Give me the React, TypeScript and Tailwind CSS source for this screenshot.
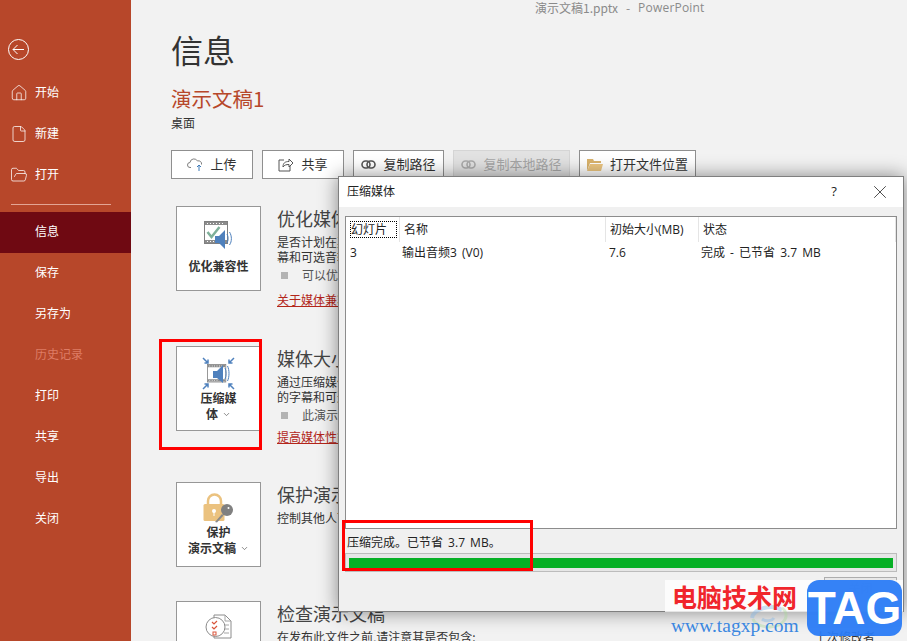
import { ChevronDown, File, FolderOpen, Home, X } from 'lucide-react';
import type { ReactNode } from 'react';

const FONT = "font-['Noto_Sans_CJK_SC','Noto_Sans',sans-serif]";

function NavItem({ label, icon, active, muted, low }: { label: string; icon?: ReactNode; active?: boolean; muted?: boolean; low?: boolean }) {
  return (
    <div
      className={`flex h-[41px] items-center text-[12px] ${active ? 'bg-[#6f0912] text-white' : muted ? 'text-[#de7c65]' : 'text-white'}`}
    >
      <span className="flex w-[35px] justify-center pl-[3px]">{icon}</span>
      <span className={low ? 'pb-[4px]' : 'pb-[2px]'}>{label}</span>
    </div>
  );
}

function Sidebar() {
  return (
    <div className="flex h-full w-[131px] shrink-0 flex-col bg-[#b7472a]">
      <div className="h-[72px] pl-[8px] pt-[39px]">
        <svg width="21" height="21" viewBox="0 0 21 21" fill="none" stroke="white" strokeWidth="1">
          <circle cx="10.5" cy="10.5" r="10" />
          <path d="M5 10.5h11M9.5 6l-4.5 4.5 4.5 4.5" />
        </svg>
      </div>
      <NavItem label="开始" icon={<Home size={18} strokeWidth={1} />} />
      <NavItem label="新建" icon={<File size={18} strokeWidth={1} />} />
      <NavItem label="打开" icon={<FolderOpen size={18} strokeWidth={1} />} />
      <div className="mb-[7px] ml-[11px] mt-[9px] h-px w-[100px] bg-[#e3a594]" />
      <NavItem label="信息" active low />
      <NavItem label="保存" low />
      <NavItem label="另存为" low />
      <NavItem label="历史记录" muted low />
      <NavItem label="打印" low />
      <NavItem label="共享" low />
      <NavItem label="导出" low />
      <NavItem label="关闭" low />
    </div>
  );
}

function LinkIcon({ color }: { color: string }) {
  return (
    <svg width="15" height="9" viewBox="0 0 15 9" fill="none" stroke={color} strokeWidth="1.6">
      <rect x="1" y="1" width="8" height="7" rx="3.5" />
      <rect x="6" y="1" width="8" height="7" rx="3.5" />
    </svg>
  );
}

function ActionButton({ label, icon, width, disabled }: { label: string; icon: ReactNode; width: string; disabled?: boolean }) {
  return (
    <div
      className={`flex h-[29px] items-center justify-center gap-[7px] border text-[13px] ${width} ${
        disabled ? 'border-[#d5d5d5] bg-[#e2e2e2] text-[#a6a6a6]' : 'border-[#8f8f8f] bg-white text-[#333]'
      }`}
    >
      {icon}
      <span className="pb-px">{label}</span>
    </div>
  );
}

function FilmSpeaker() {
  return (
    <>
      <rect x="0.5" y="0.5" width="23" height="22" fill="#fff" stroke="#7f7f7f" />
      <path d="M1 1h22v3H1zM1 19h22v3H1z" fill="#8c8c8c" />
      <path d="M3 2h1v1H3zM6 2h1v1H6zM9 2h1v1H9zM12 2h1v1h-1zM15 2h1v1h-1zM18 2h1v1h-1zM3 20h1v1H3zM6 20h1v1H6zM9 20h1v1H9zM12 20h1v1h-1z" fill="#fff" />
    </>
  );
}

function OptimizeIcon() {
  return (
    <svg width="29" height="29" viewBox="0 0 29 29" fill="none">
      <FilmSpeaker />
      <path d="M3.5 11l4 5 8-10" stroke="#7fb09a" strokeWidth="2.5" />
      <path d="M11 15h4l6-6v19l-6-6h-4z" fill="#4f81bd" />
      <path d="M23 13c1.5 2.5 1.5 6.5 0 9M25.5 11c2.5 4 2.5 9.5 0 13" stroke="#4f81bd" strokeWidth="1" />
    </svg>
  );
}

function CompressIcon() {
  return (
    <svg width="33" height="33" viewBox="0 0 33 33" fill="none">
      <g transform="translate(5 7) scale(0.8)">
        <FilmSpeaker />
      </g>
      <path d="M11 14h4l6-6v18l-6-5h-4z" fill="#4f81bd" />
      <path d="M23 11c1.5 3 1.5 8 0 11M25.5 9c2 4 2 11 0 15" stroke="#4f81bd" strokeWidth="1" />
      <path
        d="M1 1l5 5M6 2.5V6H2.5M32 1l-5 5M27 2.5V6h3.5M1 32l5-5M6 30.5V27H2.5M32 32l-5-5M27 30.5V27h3.5"
        stroke="#4f81bd"
        strokeWidth="1.5"
      />
    </svg>
  );
}

function LockIcon() {
  return (
    <svg width="31" height="31" viewBox="0 0 31 31" fill="none">
      <path d="M5 11V8a6.5 6.5 0 0 1 13 0v3" stroke="#ebc27f" strokeWidth="2.5" />
      <rect x="0.5" y="11" width="21" height="17" rx="1.5" fill="#ebc27f" />
      <circle cx="11" cy="18" r="2" fill="#fff" />
      <path d="M10.5 18h1v5h-1z" fill="#fff" />
      <path d="M12 29l7-8 1.5 1.5-6.5 7z" fill="#8a8a8a" />
      <circle cx="24" cy="17" r="6" fill="#808080" />
      <circle cx="25.5" cy="15" r="1" fill="#fff" />
    </svg>
  );
}

function InspectIcon() {
  return (
    <svg width="28" height="26" viewBox="0 0 28 26" fill="none">
      <path d="M9 1h11l6 6v17H9z" fill="#fff" stroke="#8c8c8c" />
      <path d="M20 1v6h6M19 11h5M19 15h5M19 19h5" stroke="#a6a6a6" />
      <circle cx="10.5" cy="13" r="9.5" fill="#fff" stroke="#8c8c8c" />
      <path d="M7 8l2 2 3-3M7 13l2 2 3-3" stroke="#d9553b" strokeWidth="1.2" />
      <rect x="8" y="18" width="3" height="3" stroke="#d9553b" />
    </svg>
  );
}

function Card({ icon, lines, caret, padTop, iconBox }: { icon: ReactNode; lines: string[]; caret?: boolean; padTop: string; iconBox: string }) {
  return (
    <div className={`flex h-[85px] w-[85px] shrink-0 flex-col items-center border border-[#979797] bg-white text-[12px] font-bold leading-[16px] text-[#333] ${padTop}`}>
      <div className={`flex items-start justify-center ${iconBox}`}>{icon}</div>
      {lines.map((line, i) => (
        <div key={line} className="flex items-center">
          {line}
          {caret && i === lines.length - 1 && <ChevronDown size={9} className="ml-[4px] text-[#666]" />}
        </div>
      ))}
    </div>
  );
}

function Section({
  heading,
  icon,
  lines,
  caret,
  body,
  bullet,
  link,
  linkGap = 'mt-[11px]',
  height,
  padTop,
  iconBox,
  aside,
}: {
  heading: string;
  icon: ReactNode;
  lines: string[];
  caret?: boolean;
  body: string[];
  bullet?: string;
  link?: string;
  linkGap?: string;
  height: string;
  padTop: string;
  iconBox: string;
  aside?: string;
}) {
  return (
    <div className={`ml-[45px] flex w-[699px] gap-[16px] ${height}`}>
      <Card icon={icon} lines={lines} caret={caret} padTop={padTop} iconBox={iconBox} />
      <div className="whitespace-nowrap">
        <div className="text-[18px] leading-[24px] text-[#444]">{heading}</div>
        <div className="mt-[4px] text-[12px] leading-[15px] text-[#333]">
          {body.map((text) => (
            <div key={text}>{text}</div>
          ))}
        </div>
        {bullet && (
          <div className="mt-[4px] flex items-center text-[12px] leading-[14px] text-[#555]">
            <span className="ml-[4px] mr-[14px] h-[7px] w-[7px] bg-[#b3b3b3]" />
            {bullet}
          </div>
        )}
        {link && <div className={`text-[12px] leading-[14px] text-[#b3261a] underline ${linkGap}`}>{link}</div>}
      </div>
      {aside && <div className="ml-auto mt-[28px] whitespace-nowrap text-[12px] leading-[16px] text-[#333]">{aside}</div>}
    </div>
  );
}

function Main() {
  return (
    <div className="relative min-w-0 flex-1 overflow-hidden bg-[#f2f2f2]">
      <div className="flex h-[14px] pl-[404px] text-[12px] leading-[16px] text-[#8a8a8a]">
        <span>演示文稿1.pptx</span>
        <span className="ml-[8px]">-</span>
        <span className="ml-[8px] font-['Open_Sans',sans-serif] tracking-[0.2px]">PowerPoint</span>
      </div>
      <div className="ml-[40px] mt-[13px] text-[32px] leading-[44px] text-[#333]">信息</div>
      <div className="ml-[40px] mt-[12px] text-[20.5px] leading-[30px] text-[#b7472a]">演示文稿1</div>
      <div className="ml-[40px] mt-[2px] text-[12px] leading-[16px] text-[#333]">桌面</div>
      <div className="ml-[40px] mt-[19px] flex gap-[9px]">
        <ActionButton
          label="上传"
          width="w-[82px]"
          icon={
            <svg width="16" height="15" viewBox="0 0 16 15" fill="none">
              <path d="M4 10.5H3a2.5 2.5 0 0 1 0-5 4 4 0 0 1 7.5-1.5 3 3 0 0 1 4 3.5" stroke="#808080" />
              <path d="M12 14V8M10 10l2-2 2 2" stroke="#3d7ab8" />
            </svg>
          }
        />
        <ActionButton
          label="共享"
          width="w-[82px]"
          icon={
            <svg width="16" height="15" viewBox="0 0 16 15" fill="none" stroke="#555">
              <path d="M6 3H1v11h11V9" />
              <path d="M5 10c0-4 2-5.5 6-5.5V2l4 4-4 4V7.5c-3 0-4.5.5-6 2.5z" />
            </svg>
          }
        />
        <ActionButton label="复制路径" width="w-[91px]" icon={<LinkIcon color="#555" />} />
        <ActionButton label="复制本地路径" width="w-[117px]" disabled icon={<LinkIcon color="#aaa" />} />
        <ActionButton
          label="打开文件位置"
          width="w-[117px]"
          icon={
            <svg width="16" height="13" viewBox="0 0 16 13">
              <path d="M0 13V1h6l1 2h7v2H3z" fill="#d9b26b" />
              <path d="M0 13l3-7h13l-2 7z" fill="#ecc681" />
            </svg>
          }
        />
      </div>
      <div className="mt-[27px]">
        <Section
          height="h-[140px]"
          padTop="pt-[14px]"
          iconBox="h-[37px]"
          heading="优化媒体兼容性"
          icon={<OptimizeIcon />}
          lines={['优化兼容性']}
          body={['是否计划在其他设备上演示此演示文稿?优化媒体兼容性可改善播放效果,包括字', '幕和可选音轨。']}
          bullet="可以优化演示文稿中的媒体文件。"
          link="关于媒体兼容性的详细信息"
        />
        <Section
          height="h-[136px]"
          padTop="pt-[10px]"
          iconBox="h-[33px]"
          heading="媒体大小和性能"
          icon={<CompressIcon />}
          lines={['压缩媒', '体']}
          caret
          body={['通过压缩媒体文件可节省磁盘空间并提高播放性能。压缩媒体可能影响媒体质量。', '的字幕和可选音轨已被删除。']}
          bullet="此演示文稿中的媒体文件为 3.9 MB。"
          link="提高媒体性能"
          linkGap="mt-[8px]"
        />
        <Section
          height="h-[119px]"
          padTop="pt-[10px]"
          iconBox="h-[31px]"
          heading="保护演示文稿"
          icon={<LockIcon />}
          lines={['保护', '演示文稿']}
          caret
          body={['控制其他人可以对此演示文稿所做的更改类型。']}
        />
        <Section
          height="h-[40px]"
          padTop="pt-[12px]"
          iconBox="h-[37px]"
          heading="检查演示文稿"
          icon={<InspectIcon />}
          lines={[]}
          body={['在发布此文件之前,请注意其是否包含:']}
          aside="上次修改者"
        />
      </div>
    </div>
  );
}

function Dialog() {
  return (
    <div className="absolute left-[338px] top-[176px] flex h-[436px] w-[566px] flex-col border border-[#7f7f7f] bg-[#f0f0f0] font-['Open_Sans','Noto_Sans_CJK_SC',sans-serif] text-[12px] text-[#222] [word-spacing:2px] shadow-[0_0_18px_rgba(0,0,0,0.45)]">
      <div className="flex h-[30px] shrink-0 items-center bg-white pl-[8px]">
        <span className="flex-1 pb-px">压缩媒体</span>
        <span className="w-[46px] text-center text-[13px]">?</span>
        <span className="flex w-[46px] justify-center">
          <X size={22} strokeWidth={0.8} className="text-[#111]" />
        </span>
      </div>
      <div className="flex min-h-0 flex-1 flex-col px-[6px] pt-[9px]">
        <div className="h-[313px] shrink-0 border border-[#8c8c8c] bg-white">
          <div className="flex h-[25px] items-center">
            <div className="flex h-[25px] w-[54px] items-center border-r border-[#e5e5e5] pl-[4px]">
              <span className="h-[17px] w-[47px] border border-dotted border-black leading-[15px]">幻灯片</span>
            </div>
            <div className="flex h-[25px] w-[206px] items-center border-r border-[#e5e5e5] pl-[4px]">名称</div>
            <div className="flex h-[25px] w-[93px] items-center border-r border-[#e5e5e5] pl-[4px]">初始大小(MB)</div>
            <div className="flex h-[25px] flex-1 items-center border-r border-[#e5e5e5] pl-[4px]">状态</div>
          </div>
          <div className="flex h-[21px] items-center">
            <div className="w-[54px] pl-[4px]">3</div>
            <div className="w-[206px] pl-[2px]">输出音频3 (V0)</div>
            <div className="w-[93px] pl-[3px]">7.6</div>
            <div className="pl-[2px]">完成 - 已节省 3.7 MB</div>
          </div>
        </div>
        <div className="mt-[5px] h-[18px] pl-[2px] leading-[18px]">压缩完成。已节省 3.7 MB。</div>
        <div className="mt-px flex h-[19px] shrink-0 items-center border border-[#bcbcbc] bg-[#e6e6e6] px-[3px]">
          <div className="h-[10px] w-full bg-[#06b025]" />
        </div>
        <div className="mt-[5px] flex justify-end">
          <div className="flex h-[26px] w-[73px] items-center justify-center border border-[#adadad] bg-[#e8e8e8] pb-[2px] text-[#555]">关闭</div>
        </div>
      </div>
    </div>
  );
}

function Watermark() {
  return (
    <>
      <div className="absolute left-[665px] top-[580px] h-[32px] w-[238px] bg-white/80" />
      <svg className="absolute left-[748px] top-[604px] opacity-40" width="50" height="26" viewBox="0 0 50 26" fill="none">
        <path d="M4 14c2-10 20-14 30-8" stroke="#7fb4e6" strokeWidth="4" />
        <path d="M34 4c8 6 4 18-12 19-10 0-16-4-17-8" stroke="#a9d89a" strokeWidth="3" />
        <path d="M14 15c4 3 10 2 12-1" stroke="#7fb4e6" strokeWidth="3" />
      </svg>
      <div className="absolute left-[672px] top-[580px] whitespace-nowrap text-[25px] font-bold leading-[32px] text-[#f0262c]">
        电脑技术网
      </div>
      <div className="absolute left-[671px] top-[614px] whitespace-nowrap font-['Liberation_Serif',serif] text-[19.5px] leading-[24px] text-[#3b87e0]">
        www.tagxp.com
      </div>
      <div className="absolute left-[807px] top-[580px] flex h-[56px] w-[95px] items-center justify-center rounded-[12px] bg-[#2a7bf6]/95 font-['Liberation_Sans',sans-serif] text-[46px] font-bold leading-none text-white">
        TAG
      </div>
    </>
  );
}

export default function App() {
  return (
    <div className={`relative flex h-[641px] w-[907px] overflow-hidden ${FONT}`}>
      <Sidebar />
      <Main />
      <div className="absolute left-[159px] top-[339px] h-[111px] w-[103px] border-[3px] border-[#ff0000]" />
      <Dialog />
      <div className="absolute left-[342px] top-[520px] h-[51px] w-[191px] border-[3px] border-[#ff0000]" />
      <Watermark />
    </div>
  );
}
